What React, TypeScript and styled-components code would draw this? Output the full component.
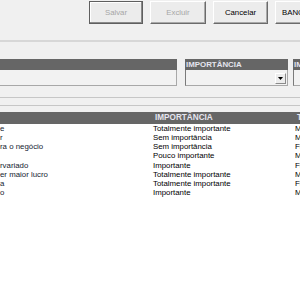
import styled, { createGlobalStyle } from 'styled-components'

const GlobalStyle = createGlobalStyle`
  body {
    margin: 0;
    background: #ffffff;
    font-family: "Liberation Sans", Arial, sans-serif;
    overflow: hidden;
  }
`

const Page = styled.div`
  width: 300px;
  height: 300px;
  overflow: hidden;
  background: #ffffff;
`

const Toolbar = styled.div`
  display: flex;
  gap: 7px;
  height: 42px;
  padding: 1px 0 0 89px;
  box-sizing: border-box;
  background: #f0f0f0;
  border-bottom: 2px solid #d7d7d7;
  white-space: nowrap;
  overflow: hidden;
`

const Button = styled.button<{ $w: number; $focus?: boolean }>`
  flex: 0 0 auto;
  width: ${p => p.$w}px;
  height: 23px;
  padding: 0;
  font: 7.8px "Liberation Sans", Arial, sans-serif;
  color: #000;
  background: #ececec;
  border: 1px solid;
  border-color: ${p => (p.$focus ? '#5f5f5f' : '#ffffff #6b6b6b #6b6b6b #ffffff')};
  box-shadow: ${p => (p.$focus ? 'inset -1px -1px #8a8a8a, inset 1px 1px #ffffff' : 'inset -1px -1px #a9a9a9')};
  text-align: ${p => (p.$w > 60 ? 'left' : 'center')};
  padding-left: ${p => (p.$w > 60 ? '6px' : '0')};
  &:disabled {
    color: #a6a6a6;
  }
`

const FilterArea = styled.div`
  background: #f0f0f0;
  height: 56px;
  padding-top: 17px;
  box-sizing: border-box;
  border-bottom: 1px solid #c6c6c6;
`

const FilterRow = styled.div`
  display: flex;
  white-space: nowrap;
  overflow: hidden;
`

const Filter = styled.div<{ $w: number; $gap: number }>`
  flex: 0 0 auto;
  width: ${p => p.$w}px;
  margin-right: ${p => p.$gap}px;
`

const FilterHead = styled.div`
  height: 11px;
  background: #666666;
  color: #e4e4ee;
  font: bold 7.9px "Liberation Sans", Arial, sans-serif;
  line-height: 11px;
  padding-left: 1px;
  overflow: hidden;
`

const FilterBox = styled.div<{ $edge?: boolean }>`
  position: relative;
  height: 16px;
  box-sizing: border-box;
  background: #f2f2f2;
  border-bottom: 1px solid #a8a8a8;
  border-right: 1px solid #a8a8a8;
  border-left: ${p => (p.$edge ? 'none' : '1px solid #7a7a7a')};
`

const DropButton = styled.div`
  position: absolute;
  right: 1px;
  top: 3px;
  width: 11px;
  height: 11px;
  background: #ececec;
  border: 1px solid;
  border-color: #ffffff #8a8a8a #8a8a8a #ffffff;
  box-sizing: border-box;
  display: flex;
  align-items: center;
  justify-content: center;
`

const Strip = styled.div`
  height: 7px;
  background: #f0f0f0;
  border-bottom: 1px solid #c6c6c6;
`

const Spacer = styled.div`
  height: 6px;
  background: #f0f0f0;
`

const Grid = styled.div`
  background: #ffffff;
`

const GridRow = styled.div<{ $head?: boolean }>`
  display: grid;
  grid-template-columns: 150px 142px 1fr;
  height: ${p => (p.$head ? '12px' : '9.15px')};
  background: ${p => (p.$head ? '#666666' : '#ffffff')};
  white-space: nowrap;
  overflow: hidden;
`

const Cell = styled.div<{ $head?: boolean; $first?: boolean }>`
  overflow: hidden;
  padding-left: ${p => (p.$head ? '5px' : p.$first ? '0' : '3px')};
  font: ${p => (p.$head ? 'bold 8.2px' : 'normal 7.85px')} "Liberation Sans", Arial, sans-serif;
  line-height: ${p => (p.$head ? '12px' : '9.15px')};
  color: ${p => (p.$head ? '#e4e4ee' : p.$first ? '#141c30' : '#000000')};
`

const rows = [
  ['e', 'Totalmente importante', 'Mercado'],
  ['r', 'Sem importância', 'Mercado'],
  ['ra o negócio', 'Sem importância', 'Financeiro'],
  ['', 'Pouco importante', 'Mercado'],
  ['rvariado', 'Importante', 'Financeiro'],
  ['er maior lucro', 'Totalmente importante', 'Mercado'],
  ['a', 'Totalmente importante', 'Financeiro'],
  ['o', 'Importante', 'Mercado'],
]

const Arrow = () => (
  <svg width="5" height="3" viewBox="0 0 5 3">
    <path d="M0 0 H5 L2.5 3 Z" fill="#000" />
  </svg>
)

export default function App() {
  return (
    <Page>
      <GlobalStyle />
      <Toolbar>
        <Button $w={54} $focus disabled>Salvar</Button>
        <Button $w={56} disabled>Excluir</Button>
        <Button $w={55}>Cancelar</Button>
        <Button $w={70}>BANCO</Button>
      </Toolbar>
      <FilterArea>
        <FilterRow>
          <Filter $w={177} $gap={8}>
            <FilterHead />
            <FilterBox $edge />
          </Filter>
          <Filter $w={103} $gap={5}>
            <FilterHead>IMPORTÂNCIA</FilterHead>
            <FilterBox>
              <DropButton><Arrow /></DropButton>
            </FilterBox>
          </Filter>
          <Filter $w={80} $gap={0}>
            <FilterHead>IMPORTÂNCIA</FilterHead>
            <FilterBox />
          </Filter>
        </FilterRow>
      </FilterArea>
      <Strip />
      <Spacer />
      <Grid>
        <GridRow $head>
          <Cell $head />
          <Cell $head>IMPORTÂNCIA</Cell>
          <Cell $head>TIPO</Cell>
        </GridRow>
        {rows.map((r, i) => (
          <GridRow key={i}>
            <Cell $first>{r[0]}</Cell>
            <Cell>{r[1]}</Cell>
            <Cell>{r[2]}</Cell>
          </GridRow>
        ))}
      </Grid>
    </Page>
  )
}
